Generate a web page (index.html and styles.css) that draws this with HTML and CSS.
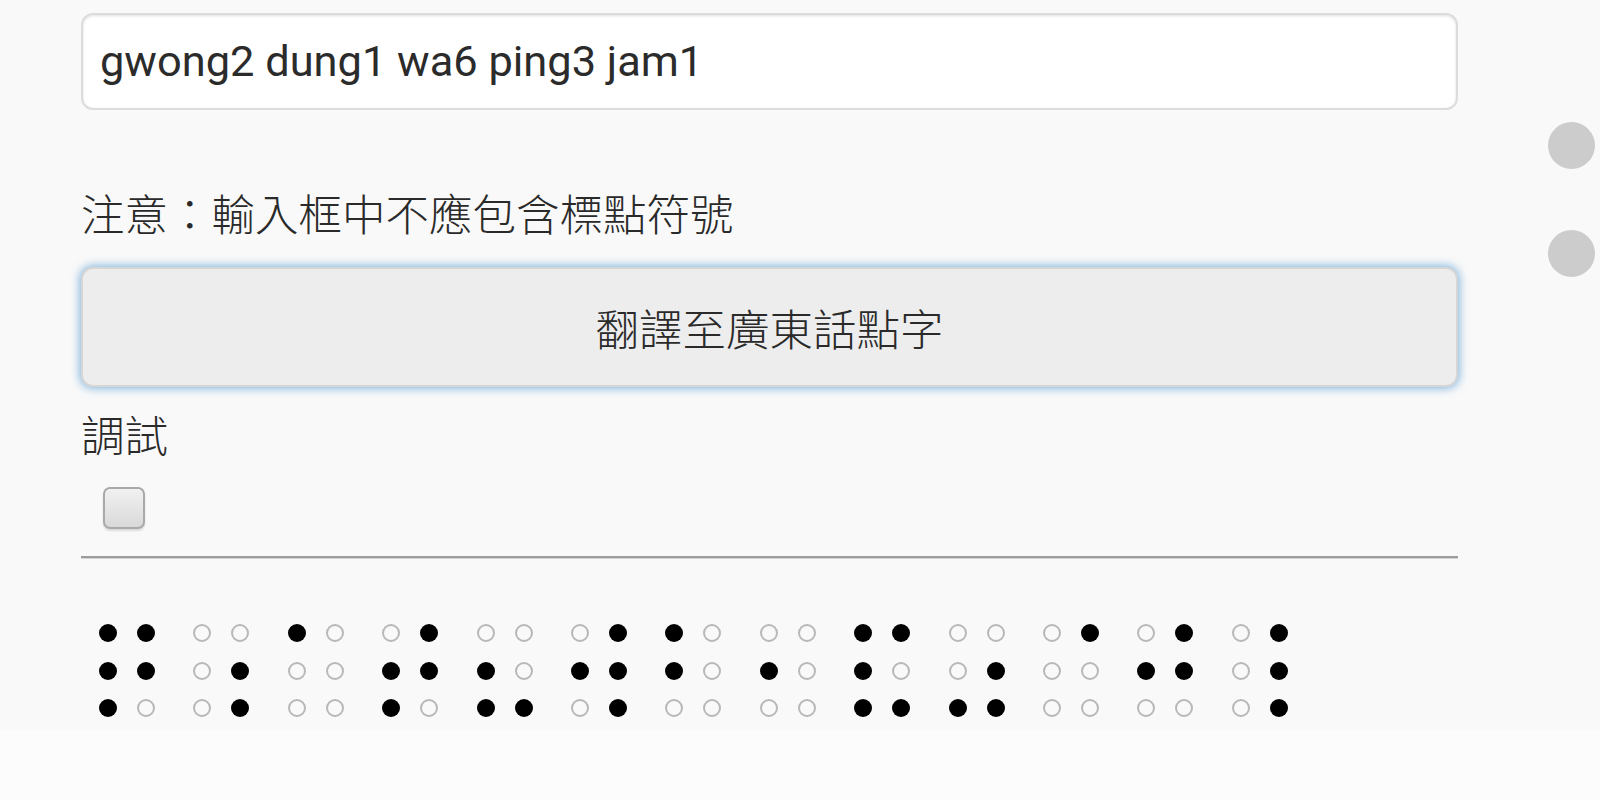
FILE: index.html
```html
<!DOCTYPE html>
<html lang="zh-Hant">
<head>
<meta charset="utf-8">
<title>廣東話點字</title>
<link rel="stylesheet" href="styles.css">
</head>
<body>
<div class="page">
  <input class="text-input" type="text" value="gwong2 dung1 wa6 ping3 jam1">
  <p class="note">注意：輸入框中不應包含標點符號</p>
  <button class="translate-btn" type="button">翻譯至廣東話點字</button>
  <div class="label">調試</div>
  <input class="debug-check" type="checkbox">
  <hr class="divider">
  <div class="braille">
    <div class="cell"><i class="on"></i><i class="on"></i><i class="on"></i><i class="on"></i><i class="on"></i><i class="off"></i></div>
    <div class="cell"><i class="off"></i><i class="off"></i><i class="off"></i><i class="on"></i><i class="off"></i><i class="on"></i></div>
    <div class="cell"><i class="on"></i><i class="off"></i><i class="off"></i><i class="off"></i><i class="off"></i><i class="off"></i></div>
    <div class="cell"><i class="off"></i><i class="on"></i><i class="on"></i><i class="on"></i><i class="on"></i><i class="off"></i></div>
    <div class="cell"><i class="off"></i><i class="off"></i><i class="on"></i><i class="off"></i><i class="on"></i><i class="on"></i></div>
    <div class="cell"><i class="off"></i><i class="on"></i><i class="on"></i><i class="on"></i><i class="off"></i><i class="on"></i></div>
    <div class="cell"><i class="on"></i><i class="off"></i><i class="on"></i><i class="off"></i><i class="off"></i><i class="off"></i></div>
    <div class="cell"><i class="off"></i><i class="off"></i><i class="on"></i><i class="off"></i><i class="off"></i><i class="off"></i></div>
    <div class="cell"><i class="on"></i><i class="on"></i><i class="on"></i><i class="off"></i><i class="on"></i><i class="on"></i></div>
    <div class="cell"><i class="off"></i><i class="off"></i><i class="off"></i><i class="on"></i><i class="on"></i><i class="on"></i></div>
    <div class="cell"><i class="off"></i><i class="on"></i><i class="off"></i><i class="off"></i><i class="off"></i><i class="off"></i></div>
    <div class="cell"><i class="off"></i><i class="on"></i><i class="on"></i><i class="on"></i><i class="off"></i><i class="off"></i></div>
    <div class="cell"><i class="off"></i><i class="on"></i><i class="off"></i><i class="on"></i><i class="off"></i><i class="on"></i></div>
  </div>
</div>
<div class="fab fab-one"></div>
<div class="fab fab-two"></div>
</body>
</html>
```
FILE: styles.css
```css
html, body {
  margin: 0;
  padding: 0;
}

body {
  background: #fcfcfc;
  font-family: Roboto, "Noto Sans CJK TC", sans-serif;
  color: #333;
  width: 1600px;
  height: 800px;
  overflow: hidden;
  position: relative;
}

.page {
  box-sizing: border-box;
  height: 730px;
  background: #f9f9f9;
  padding: 13px 0 0 81px;
  display: flex;
  flex-direction: column;
  align-items: flex-start;
}

.text-input {
  box-sizing: border-box;
  width: 1377px;
  height: 97px;
  margin: 0;
  padding: 0 17px;
  border: 2px solid #dcdcdc;
  border-radius: 12px;
  background: #fff;
  box-shadow: inset 0 1px 3px rgba(0, 0, 0, 0.12);
  font-family: Roboto, "Noto Sans CJK TC", sans-serif;
  font-size: 43.4px;
  color: #2b2b2b;
  outline: none;
}

.note,
.label {
  margin: 0;
  font-size: 43.5px;
  line-height: 52px;
  font-weight: 300;
  color: #2a2a2a;
}

.note {
  margin-top: 81px;
}

.translate-btn {
  box-sizing: border-box;
  width: 1377px;
  height: 120px;
  margin: 24px 0 0 0;
  padding: 0;
  border: 2px solid #d6d6d6;
  border-radius: 12px;
  background: #ededed;
  box-shadow: 0 0 10px 1px rgba(51, 136, 204, 0.65);
  font-family: Roboto, "Noto Sans CJK TC", sans-serif;
  font-size: 43.5px;
  font-weight: 300;
  color: #2a2a2a;
}

.label {
  margin-top: 25px;
}

.debug-check {
  appearance: none;
  -webkit-appearance: none;
  box-sizing: border-box;
  width: 42px;
  height: 42px;
  margin: 23px 0 0 22px;
  border: 2px solid #a9a9a9;
  border-radius: 7px;
  background: linear-gradient(#f1f1f1, #d9d9d9);
  box-shadow: 0 2px 2px rgba(0, 0, 0, 0.12);
}

.divider {
  box-sizing: border-box;
  width: 1377px;
  height: 3px;
  margin: 27px 0 0 0;
  border: 0;
  border-top: 2px solid #9d9d9d;
  border-bottom: 1px solid #d4d4d4;
}

.braille {
  display: flex;
  gap: 38.4px;
  margin: 65px 0 0 18px;
}

.cell {
  display: grid;
  grid-template-columns: 18px 18px;
  grid-auto-rows: 18px;
  column-gap: 20px;
  row-gap: 19.7px;
}

.cell i {
  display: block;
  box-sizing: border-box;
  width: 18px;
  height: 18px;
  border-radius: 50%;
}

.cell .on {
  background: #000;
}

.cell .off {
  border: 2px solid #b8b8b8;
}

.fab {
  position: absolute;
  left: 1548px;
  width: 47px;
  height: 47px;
  border-radius: 50%;
  background: #cccccc;
}

.fab-one {
  top: 122px;
}

.fab-two {
  top: 230px;
}
```
